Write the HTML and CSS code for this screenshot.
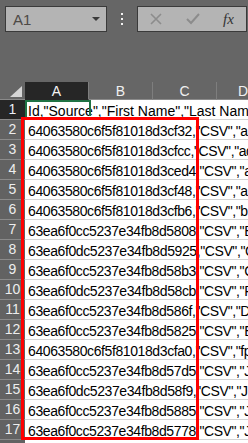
FILE: index.html
```html
<!DOCTYPE html>
<html lang="en">
<head>
    <meta charset="UTF-8">
    <title>Sheet</title>
    <link rel="stylesheet" href="styles.css">
</head>
<body>

<div class="formula-bar">
    <div class="name-box">
        <span class="name-text">A1</span>
        <span class="name-arrow"></span>
    </div>
    <div class="grip">
        <span></span><span></span><span></span>
    </div>
    <div class="formula-box">
        <svg class="fb-icon" width="14" height="14" viewBox="0 0 14 14">
            <path d="M2 2 L12 12 M12 2 L2 12" stroke="#8c8c8c" stroke-width="1.6" fill="none"/>
        </svg>
        <svg class="fb-icon" width="16" height="14" viewBox="0 0 16 14">
            <path d="M2 7 L6 11 L14 2" stroke="#8c8c8c" stroke-width="2" fill="none"/>
        </svg>
        <span class="fx">fx</span>
    </div>
</div>

<div class="sheet">
    <div class="col-heads">
        <div class="corner"><span class="select-all"></span></div>
        <div class="col-head active">A</div>
        <div class="col-head">B</div>
        <div class="col-head">C</div>
        <div class="col-head">D</div>
    </div>

    <div class="row">
        <div class="row-head active">1</div>
        <div class="cell header-cell">Id,"Source","First Name","Last Name"</div>
        <div class="selection"><span class="handle"></span></div>
    </div>
    <div class="row"><div class="row-head">2</div><div class="cell">64063580c6f5f81018d3cf32,"CSV","aa</div></div>
    <div class="row"><div class="row-head">3</div><div class="cell">64063580c6f5f81018d3cfcc,"CSV","ad</div></div>
    <div class="row"><div class="row-head">4</div><div class="cell">64063580c6f5f81018d3ced4,"CSV","a</div></div>
    <div class="row"><div class="row-head">5</div><div class="cell">64063580c6f5f81018d3cf48,"CSV","an</div></div>
    <div class="row"><div class="row-head">6</div><div class="cell">64063580c6f5f81018d3cfb6,"CSV","b</div></div>
    <div class="row"><div class="row-head">7</div><div class="cell">63ea6f0cc5237e34fb8d5808,"CSV","B</div></div>
    <div class="row"><div class="row-head">8</div><div class="cell">63ea6f0dc5237e34fb8d5925,"CSV","C</div></div>
    <div class="row"><div class="row-head">9</div><div class="cell">63ea6f0cc5237e34fb8d58b3,"CSV","C</div></div>
    <div class="row"><div class="row-head">10</div><div class="cell">63ea6f0dc5237e34fb8d58cb,"CSV","R</div></div>
    <div class="row"><div class="row-head">11</div><div class="cell">63ea6f0cc5237e34fb8d586f,"CSV","D</div></div>
    <div class="row"><div class="row-head">12</div><div class="cell">63ea6f0cc5237e34fb8d5825,"CSV","E</div></div>
    <div class="row"><div class="row-head">13</div><div class="cell">64063580c6f5f81018d3cfa0,"CSV","fp</div></div>
    <div class="row"><div class="row-head">14</div><div class="cell">63ea6f0cc5237e34fb8d57d5,"CSV","J</div></div>
    <div class="row"><div class="row-head">15</div><div class="cell">63ea6f0dc5237e34fb8d58f9,"CSV","J</div></div>
    <div class="row"><div class="row-head">16</div><div class="cell">63ea6f0cc5237e34fb8d5885,"CSV","J</div></div>
    <div class="row"><div class="row-head">17</div><div class="cell">63ea6f0cc5237e34fb8d5778,"CSV","J</div></div>
    <div class="row"><div class="row-head">18</div><div class="cell"></div></div>

    <div class="highlight"></div>
</div>

</body>
</html>
```

FILE: styles.css
```css
body {
    margin: 0;
    background: #666666;
    font-family: "Liberation Sans", Arial, sans-serif;
    overflow: hidden;
}

/* formula bar */
.formula-bar {
    display: flex;
    align-items: flex-start;
    height: 82px;
    box-sizing: border-box;
    padding: 6px 1px 0 5px;
}

.name-box {
    position: relative;
    width: 102px;
    height: 26px;
    box-sizing: border-box;
    background: #b4b4b4;
    border: 1px solid #3a3a3a;
    display: flex;
    align-items: center;
    padding-left: 7px;
}

.name-text {
    font-size: 15px;
    color: #4e4a46;
}

.name-arrow {
    position: absolute;
    right: 6px;
    top: 10px;
    border-left: 4px solid transparent;
    border-right: 4px solid transparent;
    border-top: 4px solid #3a3a3a;
}

.grip {
    width: 30px;
    display: flex;
    flex-direction: column;
    align-items: center;
    gap: 3px;
    padding-top: 7px;
}

.grip span {
    width: 2px;
    height: 2px;
    background: #f2f2f2;
}

.formula-box {
    flex: 1;
    height: 26px;
    box-sizing: border-box;
    background: #b4b4b4;
    border: 1px solid #3a3a3a;
    display: flex;
    align-items: center;
    padding-left: 11px;
    gap: 22px;
}

.fx {
    font-family: "Liberation Serif", serif;
    font-style: italic;
    font-size: 15px;
    color: #333333;
}

/* grid */
.sheet {
    position: relative;
}

.col-heads {
    display: flex;
    height: 18px;
}

.corner {
    position: relative;
    width: 25px;
    flex: none;
    background: #666666;
    border-bottom: 1px solid #8a8a8a;
    box-sizing: border-box;
}

.select-all {
    position: absolute;
    right: 3px;
    bottom: 2px;
    border-left: 12px solid transparent;
    border-bottom: 11px solid #d6d6d6;
}

.col-head {
    width: 64px;
    flex: none;
    box-sizing: border-box;
    border-right: 1px solid #7e7e7e;
    border-bottom: 1px solid #8a8a8a;
    color: #f0f0f0;
    font-size: 14px;
    text-align: center;
    line-height: 18px;
}

.col-head:last-child {
    width: 31px;
    border-right: 0;
    text-align: right;
    overflow: hidden;
    text-indent: 6px;
}

.col-head.active {
    background: #262626;
    border-bottom: 1px solid #262626;
    color: #f4f4f4;
}

.row {
    position: relative;
    display: flex;
    height: 20px;
}

.row-head {
    width: 25px;
    flex: none;
    box-sizing: border-box;
    background: #626262;
    border-bottom: 1px solid #8a8a8a;
    color: #ededed;
    font-size: 14px;
    text-align: center;
    line-height: 19px;
}

.row-head.active {
    background: #262626;
    color: #eaf0f8;
}

.cell {
    flex: 1;
    min-width: 0;
    box-sizing: border-box;
    background: #ffffff;
    border-bottom: 1px solid #d4d4d4;
    padding: 4px 0 0 3px;
    line-height: 15px;
    font-size: 14px;
    letter-spacing: -0.4px;
    color: #000000;
    white-space: nowrap;
    overflow: hidden;
}

.header-cell {
    letter-spacing: 0;
}

.selection {
    position: absolute;
    left: 25px;
    top: 0;
    width: 66px;
    height: 21px;
    box-sizing: border-box;
    border: 2px solid #1f7244;
}

.handle {
    position: absolute;
    right: -4px;
    bottom: -4px;
    width: 5px;
    height: 5px;
    background: #1f7244;
    border: 1px solid #ffffff;
}

.highlight {
    position: absolute;
    left: 21px;
    top: 35px;
    width: 178px;
    height: 323px;
    box-sizing: border-box;
    border: 3px solid #ff0000;
}
```
